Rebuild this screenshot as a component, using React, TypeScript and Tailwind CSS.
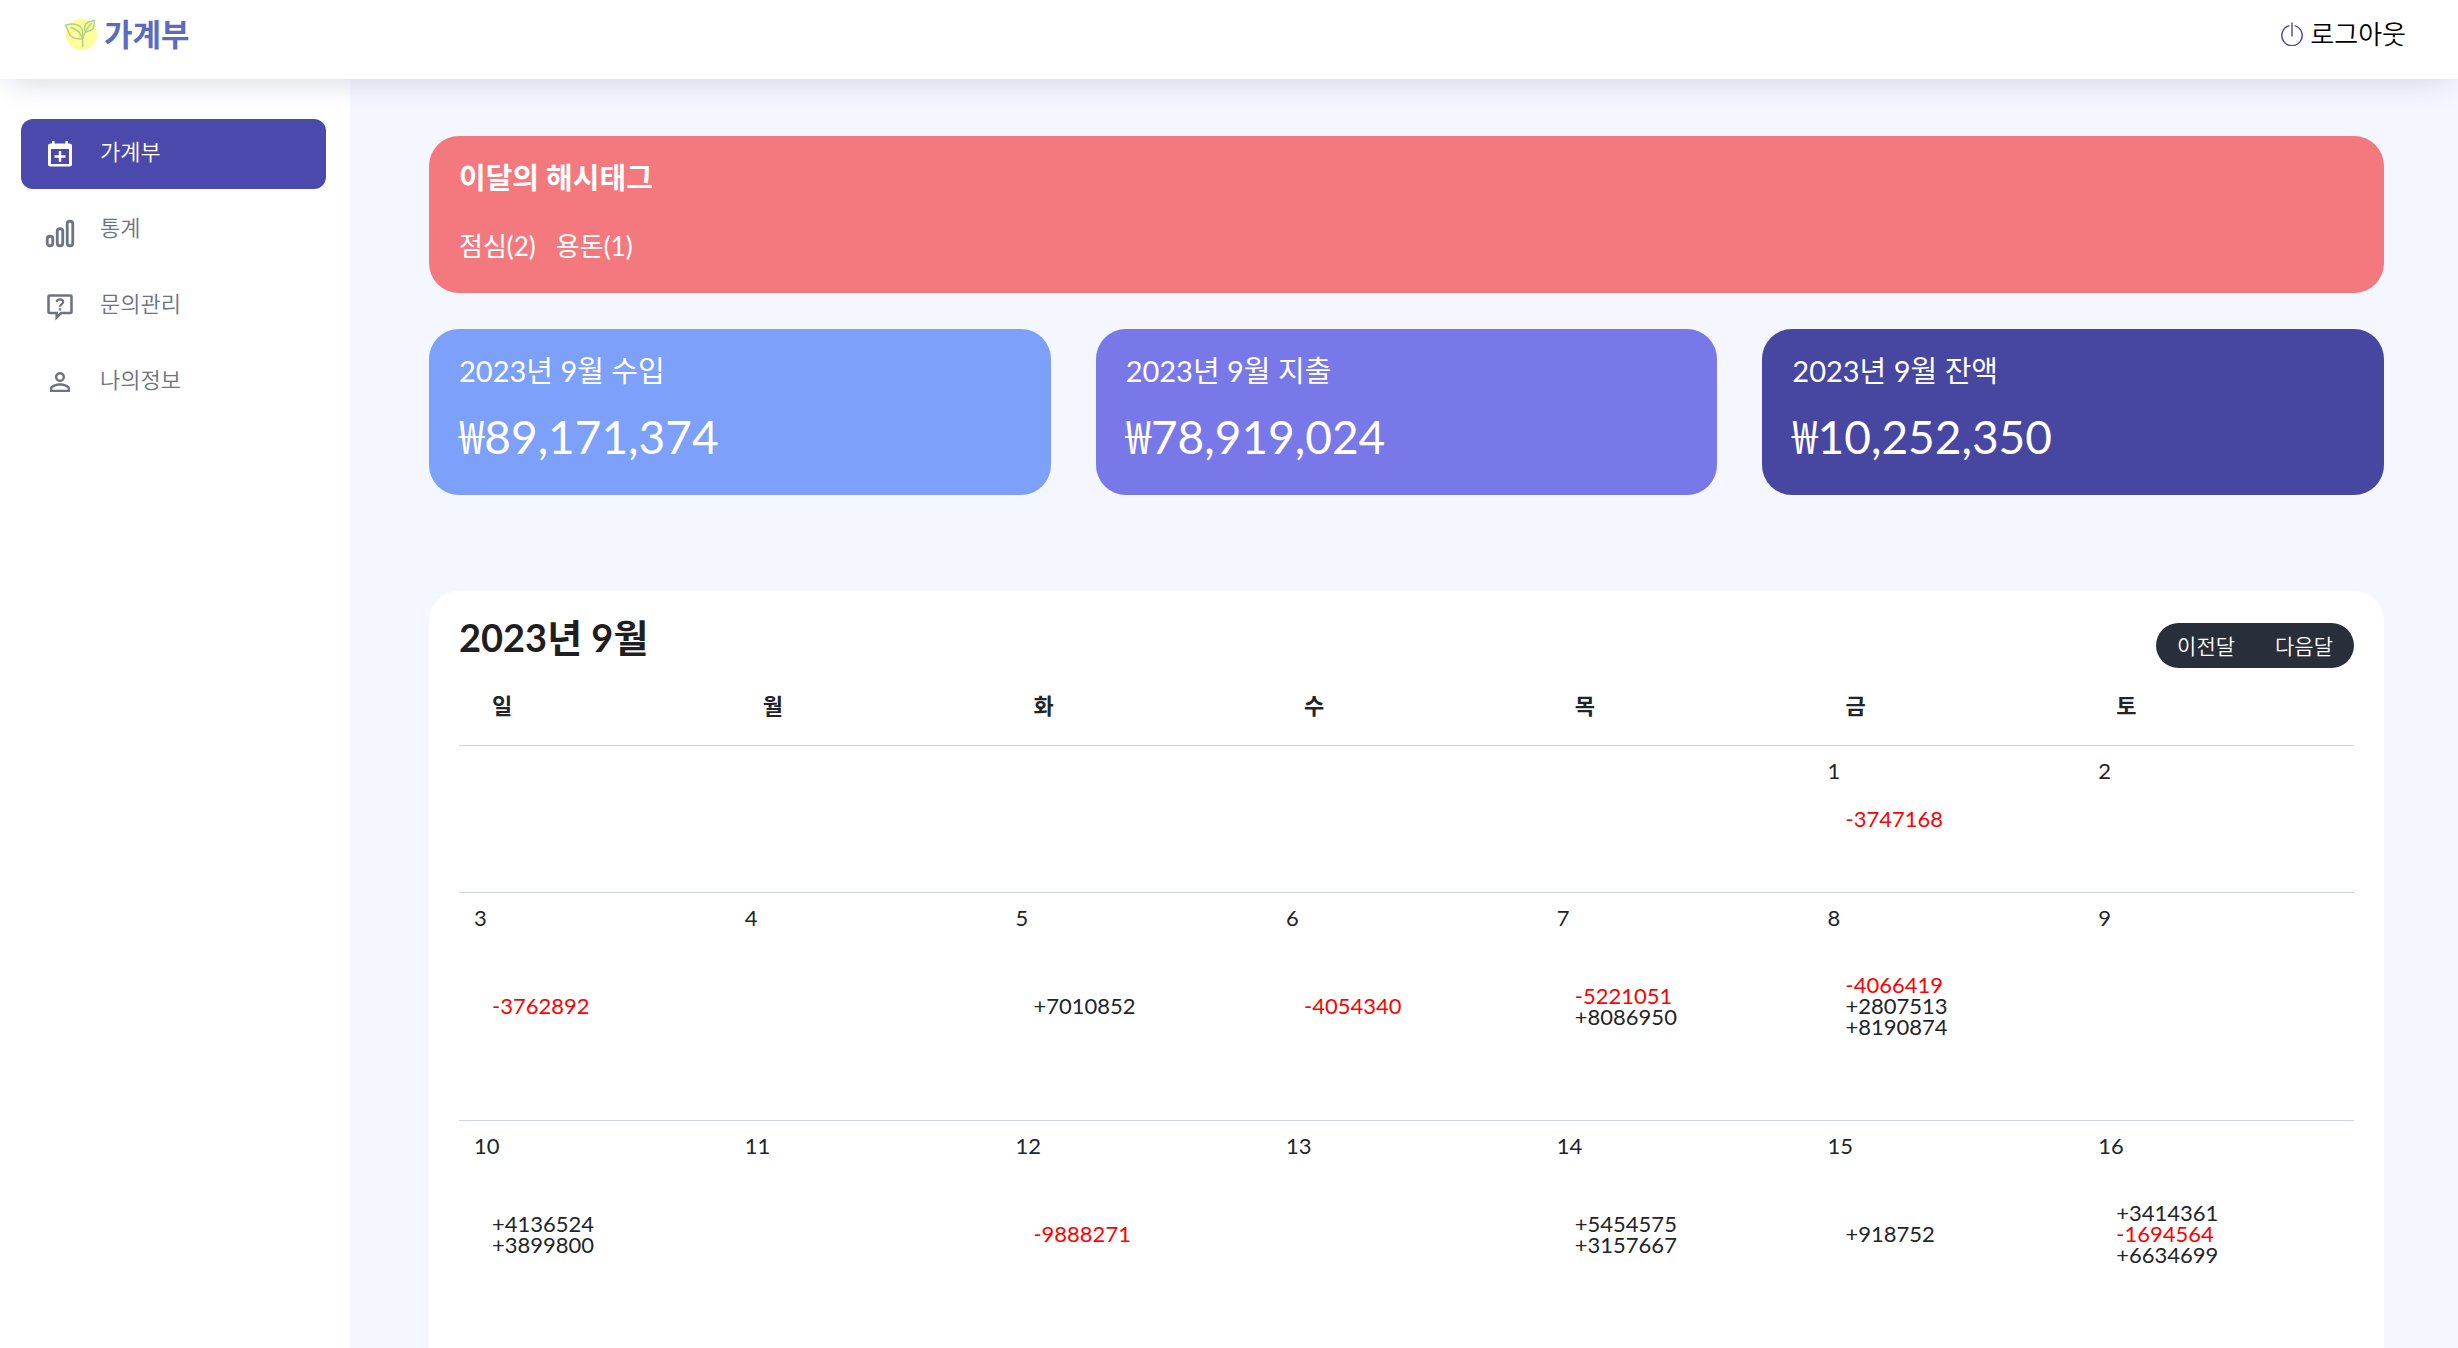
import { MdPersonOutline } from 'react-icons/md';
import type { ReactNode } from 'react';

const days = ['일', '월', '화', '수', '목', '금', '토'];

type Day = { date?: number; amounts?: string[] };

const weeks: { height: string; days: Day[] }[] = [
  {
    height: 'h-[146px]',
    days: [{}, {}, {}, {}, {}, { date: 1, amounts: ['-3747168'] }, { date: 2 }],
  },
  {
    height: 'h-[227px]',
    days: [
      { date: 3, amounts: ['-3762892'] },
      { date: 4 },
      { date: 5, amounts: ['+7010852'] },
      { date: 6, amounts: ['-4054340'] },
      { date: 7, amounts: ['-5221051', '+8086950'] },
      { date: 8, amounts: ['-4066419', '+2807513', '+8190874'] },
      { date: 9 },
    ],
  },
  {
    height: 'h-[227px]',
    days: [
      { date: 10, amounts: ['+4136524', '+3899800'] },
      { date: 11 },
      { date: 12, amounts: ['-9888271'] },
      { date: 13 },
      { date: 14, amounts: ['+5454575', '+3157667'] },
      { date: 15, amounts: ['+918752'] },
      { date: 16, amounts: ['+3414361', '-1694564', '+6634699'] },
    ],
  },
];

const summaries = [
  { label: '2023년 9월 수입', value: '89,171,374', color: 'bg-[#7da0fa]' },
  { label: '2023년 9월 지출', value: '78,919,024', color: 'bg-[#7978e9]' },
  { label: '2023년 9월 잔액', value: '10,252,350', color: 'bg-[#4747a1]' },
];

function SproutLogo() {
  return (
    <svg viewBox="0 0 34 34" className="h-[34px] w-[34px]" fill="none" aria-hidden="true">
      <circle cx="17.5" cy="17.5" r="15.7" fill="#fffd9b" />
      <g stroke="#aed581" strokeWidth="1.5" strokeLinecap="round" strokeLinejoin="round">
        <path d="M1.2 8.3C7 6.6 13 6.6 16.5 10c2.6 2.600 2.700 6.500 2 11.800C12 22.300 7 21 5 16.500 4 13.500 3.500 10.500 1.200 8.300Z" />
        <path d="M7 10.500c5 1.300 9.500 5 11.600 11.300V29.500" />
        <path d="M30.300 3.200c-.5 3 .5 6-1.500 8.600-2 2.300-5 2.700-7.300 3.200-1.300-3-1.300-6 .7-8.500 2.200-2.300 5.300-2 8.100-3.300Z" />
        <path d="M27.500 6.300c-2.500 2-4.500 4.500-6 8.700-1.500 2.300-2.700 4.300-2.900 7" />
      </g>
    </svg>
  );
}

function CalendarPlusIcon() {
  return (
    <svg viewBox="0 0 32 32" className="h-8 w-8" fill="currentColor" aria-hidden="true">
      <path
        fillRule="evenodd"
        d="M8 3h2.500v2.500h11V3H24v2.500h1.500A2.500 2.500 0 0 1 28 8v18a2.500 2.500 0 0 1-2.500 2.500h-19A2.500 2.500 0 0 1 4 26V8a2.500 2.500 0 0 1 2.500-2.500H8V3Zm-1 8v15h18V11H7Z"
      />
      <path d="M14.800 13h2.400v4.300h4.300v2.400h-4.300V24h-2.400v-4.300h-4.300v-2.400h4.300V13Z" />
    </svg>
  );
}

function BarsIcon() {
  return (
    <svg viewBox="0 0 32 32" className="h-8 w-8 overflow-visible" fill="none" stroke="currentColor" strokeWidth="2.800" aria-hidden="true">
      <rect x="3.250" y="22.250" width="5.500" height="9.500" rx="2.600" />
      <rect x="13.250" y="14.750" width="5.500" height="17" rx="2.600" />
      <rect x="23.250" y="7.250" width="5.500" height="24.500" rx="2.600" />
    </svg>
  );
}

function QuestionIcon() {
  return (
    <svg viewBox="0 0 32 32" className="h-8 w-8" fill="none" stroke="currentColor" strokeWidth="2.600" aria-hidden="true">
      <path d="M5.500 5.500h21a1 1 0 0 1 1 1v15.500a1 1 0 0 1-1 1H17l-4.300 4.300V23H5.500a1 1 0 0 1-1-1V6.500a1 1 0 0 1 1-1Z" />
      <path strokeWidth="2.200" d="M12.800 12c0-1.700 1.400-2.700 3.200-2.700s3.200 1 3.200 2.700c0 2-3.200 2.300-3.200 4.800" />
      <path strokeWidth="2.400" d="M16 18.300v2.200" />
    </svg>
  );
}

function PowerIcon() {
  return (
    <svg viewBox="0 0 24 24" className="h-6 w-6" fill="none" stroke="#4b49ac" strokeWidth="1.400" aria-hidden="true">
      <path d="M9.500 3.600a10.200 10.200 0 1 0 5 0M12 .5v14" />
    </svg>
  );
}

const menu: { label: string; icon: ReactNode; active?: boolean }[] = [
  { label: '가계부', icon: <CalendarPlusIcon />, active: true },
  { label: '통계', icon: <BarsIcon /> },
  { label: '문의관리', icon: <QuestionIcon /> },
  { label: '나의정보', icon: <MdPersonOutline size={30} aria-hidden="true" /> },
];

export default function App() {
  return (
    <div className="flex min-h-screen flex-col bg-white font-[Lato,'Noto_Sans_CJK_KR',sans-serif] text-[#212529]">
      <header className="relative z-10 flex h-[79px] items-center justify-between bg-white pr-[52px] pb-3 pl-16 shadow-[0_8px_32px_-8px_#cdd1e1]">
        <a href="#" className="flex items-center gap-1.5 text-[31px] leading-10 font-bold text-[#5c6bc0]">
          <SproutLogo />
          가계부
        </a>
        <button type="button" className="flex items-center gap-1.5 text-[26px] leading-10 font-[350] text-black">
          <PowerIcon />
          로그아웃
        </button>
      </header>

      <div className="flex flex-1">
        <nav className="w-[350px] shrink-0 bg-white pt-10 pr-6 pl-[21px]">
          <ul className="flex flex-col gap-1.5">
            {menu.map((item) => (
              <li key={item.label}>
                <a
                  href="#"
                  className={
                    item.active
                      ? 'flex h-[70px] items-center gap-6 rounded-xl bg-[#4b49ac] pl-[23px] text-[22px] leading-8 font-[350] text-white'
                      : 'flex h-[70px] items-center gap-6 rounded-xl pl-[23px] text-[22px] leading-8 font-[350] text-[#6c7383]'
                  }
                >
                  <span className="flex h-8 w-8 items-center justify-center">{item.icon}</span>
                  <span className="pb-1">{item.label}</span>
                </a>
              </li>
            ))}
          </ul>
        </nav>

        <main className="flex min-w-0 flex-1 flex-col bg-[#f4f7ff] pt-[57px] pr-[74px] pl-[79px]">
          <section className="rounded-[30px] bg-[#f3797e] px-[30px] pt-6 pb-[29px] text-white">
            <h2 className="text-[29px] leading-9 font-bold">이달의 해시태그</h2>
            <p className="mt-8 flex gap-5 text-[26px] leading-9">
              <span>점심(2)</span>
              <span>용돈(1)</span>
            </p>
          </section>

          <div className="mt-9 grid grid-cols-3 gap-[45px]">
            {summaries.map((s) => (
              <section key={s.label} className={`rounded-[30px] px-[30px] pt-6 pb-[34px] text-white ${s.color}`}>
                <p className="text-[29px] leading-9">{s.label}</p>
                <p className="mt-[22px] text-[46px] leading-[48px]">
                  <span className="font-['Noto_Sans_CJK_KR',sans-serif] leading-none font-[350]">₩</span>
                  {s.value}
                </p>
              </section>
            ))}
          </div>

          <section className="mt-24 flex-1 rounded-t-[30px] bg-white px-[30px] pt-6">
            <div className="flex justify-between">
              <h1 className="text-[38px] leading-[44px] font-bold text-[#1f1f1f]">2023년 9월</h1>
              <div className="mt-2 flex text-[21px] leading-[45px] font-[350] text-white">
                <button type="button" className="rounded-l-full bg-[#282f3a] pr-5 pl-[21px]">
                  이전달
                </button>
                <button type="button" className="rounded-r-full bg-[#282f3a] pr-[21px] pl-5">
                  다음달
                </button>
              </div>
            </div>
            <table className="w-full table-fixed border-collapse">
              <thead>
                <tr className="h-[77px]">
                  {days.map((d) => (
                    <th key={d} scope="col" className="pl-[33px] text-left text-[22px] leading-8 font-bold">
                      {d}
                    </th>
                  ))}
                </tr>
              </thead>
              <tbody>
                {weeks.map((week, i) => (
                  <tr key={i} className="border-t border-[#ced4da]">
                    {week.days.map((day, j) => (
                      <td key={j} className="p-0">
                        <div className={`flex flex-col ${week.height}`}>
                          <span className="h-[50px] pl-[15px] text-[22px] leading-[50px]">{day.date}</span>
                          <div className="flex flex-1 flex-col justify-center pb-[51px] pl-[33px] text-[22px] leading-[21px]">
                            {day.amounts?.map((a) => (
                              <span key={a} className={a.startsWith('-') ? 'text-[#ff0000]' : ''}>
                                {a}
                              </span>
                            ))}
                          </div>
                        </div>
                      </td>
                    ))}
                  </tr>
                ))}
              </tbody>
            </table>
          </section>
        </main>
      </div>
    </div>
  );
}
